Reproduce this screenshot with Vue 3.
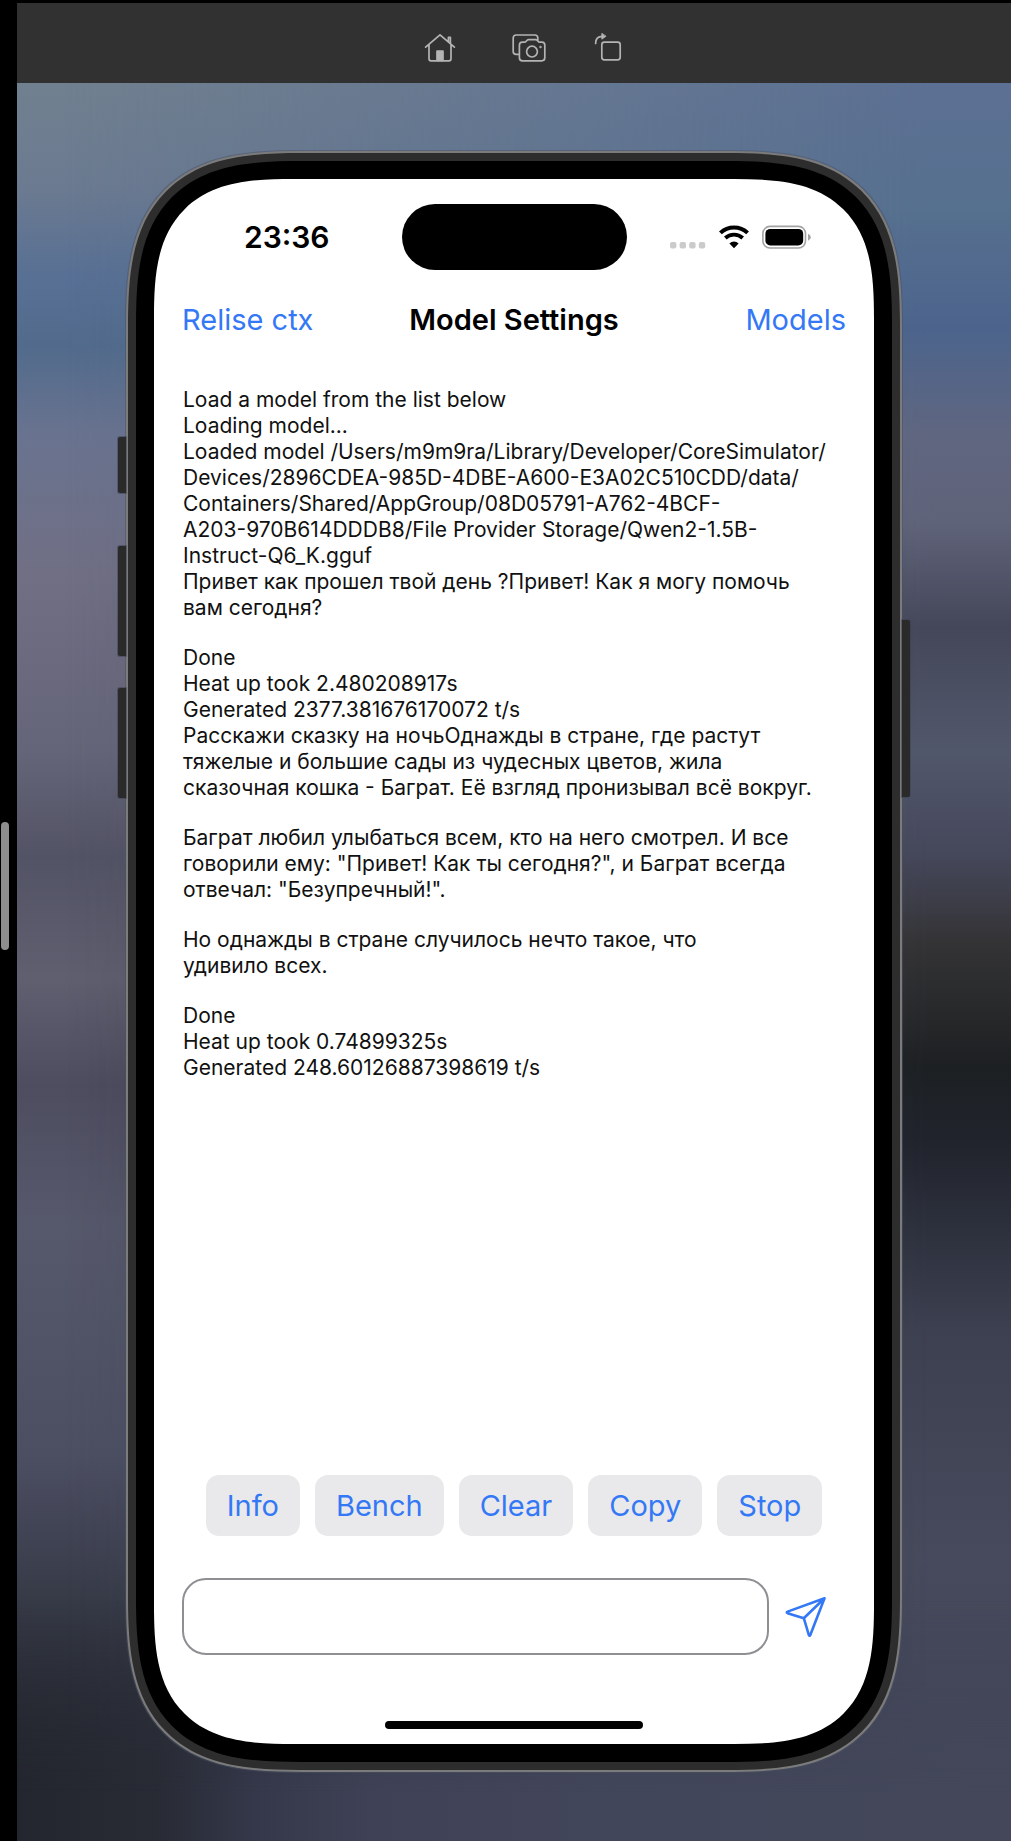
<script setup>
import { ref } from 'vue'

const message = ref('')
const actions = ['Info', 'Bench', 'Clear', 'Copy', 'Stop']
const log = [
  [
    'Load a model from the list below',
    'Loading model...',
    'Loaded model /Users/m9m9ra/Library/Developer/CoreSimulator/',
    'Devices/2896CDEA-985D-4DBE-A600-E3A02C510CDD/data/',
    'Containers/Shared/AppGroup/08D05791-A762-4BCF-',
    'A203-970B614DDDB8/File Provider Storage/Qwen2-1.5B-',
    'Instruct-Q6_K.gguf',
    'Привет как прошел твой день ?Привет! Как я могу помочь',
    'вам сегодня?',
  ],
  [
    'Done',
    'Heat up took 2.480208917s',
    'Generated 2377.381676170072 t/s',
    'Расскажи сказку на ночьОднажды в стране, где растут',
    'тяжелые и большие сады из чудесных цветов, жила',
    'сказочная кошка - Баграт. Её взгляд пронизывал всё вокруг.',
  ],
  [
    'Баграт любил улыбаться всем, кто на него смотрел. И все',
    'говорили ему: "Привет! Как ты сегодня?", и Баграт всегда',
    'отвечал: "Безупречный!".',
  ],
  ['Но однажды в стране случилось нечто такое, что', 'удивило всех.'],
  ['Done', 'Heat up took 0.74899325s', 'Generated 248.60126887398619 t/s'],
]
</script>

<template>
  <div class="desktop">
    <aside class="edge"><span class="handle"></span></aside>
    <main class="simulator">
      <header class="toolbar">
        <button class="tool home" aria-label="Home">
          <svg width="32" height="30" viewBox="0 0 32 30" fill="none" stroke="#b4b4b4" stroke-width="1.7" stroke-linejoin="round" stroke-linecap="round">
            <path d="M1.6 14.2 16 1.8l14.4 12.4M5 11.6v14.2q0 2 2 2h18q2 0 2-2V11.6M24.4 8.6V4.4h2v6" />
            <path d="M13 27.5v-9.3h6v9.3z" fill="#b4b4b4" />
          </svg>
        </button>
        <button class="tool" aria-label="Screenshot">
          <svg width="34" height="30" viewBox="0 0 34 30" fill="none" stroke="#b4b4b4" stroke-width="1.7" stroke-linejoin="round" stroke-linecap="round">
            <path d="M6.4 21.4H4.2q-3 0-3-3V5q0-3 3-3h18.6q3 0 3 3v2" />
            <path d="M10.4 9.2h2.2c1.6 0 2-2.6 3.8-2.6h7.4c1.8 0 2.2 2.6 3.8 2.6h2.2q3 0 3 3v12.6q0 3-3 3H10.4q-3 0-3-3V12.2q0-3 3-3z" />
            <circle cx="20" cy="18.6" r="5.4" />
            <circle cx="28.4" cy="14" r=".8" fill="#b4b4b4" stroke-width=".8" />
          </svg>
        </button>
        <button class="tool" aria-label="Rotate">
          <svg width="28" height="30" viewBox="0 0 28 30" fill="none" stroke="#b4b4b4" stroke-width="1.7" stroke-linejoin="round" stroke-linecap="round">
            <rect x="7.8" y="9.2" width="18.4" height="17.6" rx="2.6" />
            <path d="M1.6 10.4C1.6 5.8 4 3.4 8.4 3.4" />
            <path d="M7.8.6v5.6l4-2.8z" fill="#b4b4b4" stroke-width=".8" />
          </svg>
        </button>
      </header>

      <div class="stage">
        <div class="phone">
          <span class="side-key action"></span>
          <span class="side-key volume-up"></span>
          <span class="side-key volume-down"></span>
          <span class="side-key power"></span>
          <div class="bezel">
            <div class="screen">
              <div class="status">
                <time class="clock">23:36</time>
                <span class="island"></span>
                <div class="indicators">
                  <svg width="36" height="26" viewBox="0 0 36 26" fill="#cbcbcc">
                    <rect x="0" y="18" width="6.4" height="6.4" rx="2" />
                    <rect x="9.6" y="18" width="6.4" height="6.4" rx="2" />
                    <rect x="19.2" y="18" width="6.4" height="6.4" rx="2" />
                    <rect x="28.8" y="18" width="6.4" height="6.4" rx="2" />
                  </svg>
                  <svg width="30" height="26" viewBox="0 0 30 26" fill="none" stroke="#000">
                    <path d="M1.4 8.9a19.8 19.8 0 0 1 27.2 0" stroke-width="4" />
                    <path d="M6.3 14a12.8 12.8 0 0 1 17.4 0" stroke-width="3.8" />
                    <path d="M10.4 19.4a6.8 6.8 0 0 1 9.2 0L15 24.2z" fill="#000" stroke="none" />
                  </svg>
                  <svg width="49" height="26" viewBox="0 0 49 26">
                    <rect x=".9" y="2.4" width="42.6" height="21.6" rx="7" fill="none" stroke="#a3a3a3" stroke-width="1.6" />
                    <rect x="3.4" y="4.9" width="37.8" height="16.6" rx="4.8" />
                    <path d="M46 9.8q2.8 1 2.8 3.5T46 16.8z" fill="#a3a3a3" />
                  </svg>
                </div>
              </div>

              <nav class="nav">
                <button class="link">Relise ctx</button>
                <h1 class="title">Model Settings</h1>
                <button class="link end">Models</button>
              </nav>

              <section class="log">
                <p v-for="(block, i) in log" :key="i" class="block">{{ block.join('\n') }}</p>
              </section>

              <div class="actions">
                <button v-for="name in actions" :key="name" class="action-button">{{ name }}</button>
              </div>

              <form class="composer" @submit.prevent>
                <input v-model="message" class="field" type="text" aria-label="Message" />
                <button class="send" type="submit" aria-label="Send">
                  <svg width="42" height="42" viewBox="0 0 42 42" fill="none" stroke="#3478f6" stroke-width="2.6" stroke-linejoin="round" stroke-linecap="round">
                    <path d="M39.5 2.3 2.6 15.6q-1.6.8 0 1.6l16.2 5 5 16.6q.8 1.6 1.6 0zM39.5 2.3 18.8 22.2" />
                  </svg>
                </button>
              </form>
              <span class="home-bar"></span>
            </div>
          </div>
        </div>
      </div>
    </main>
  </div>
</template>

<style>
body {
  margin: 0;
  background: #000;
}
</style>

<style scoped>
.desktop {
  display: flex;
  box-sizing: border-box;
  min-height: 100vh;
  padding-top: 3px;
  background: #000;
  color: #000;
  font-family: Inter, "Liberation Sans", sans-serif;
}

button {
  margin: 0;
  padding: 0;
  border: 0;
  background: none;
  color: #3478f6;
  font: inherit;
}

.edge {
  display: flex;
  flex: 0 0 17px;
  align-items: center;
  padding-bottom: 72px;
}

.handle {
  width: 8px;
  height: 128px;
  margin-left: 1px;
  border-radius: 4px;
  background: #8e8e8e;
}

.simulator {
  display: flex;
  flex: 1;
  flex-direction: column;
  min-width: 0;
}

.toolbar {
  display: flex;
  align-items: center;
  justify-content: center;
  gap: 48px;
  box-sizing: border-box;
  height: 80px;
  padding: 10px 0 0 18px;
  background: #313131;
}

.tool {
  display: flex;
}

.home {
  padding-right: 8px;
}

.stage {
  position: relative;
  display: flex;
  flex: 1;
  padding: 68px 109px 69px;
  background: linear-gradient(#71808f 0%, #6b7a90 6%, #587094 11%, #526b8c 15%, #69738f 20%, #706f84 28%, #656579 38%, #525364 44%, #5f5f70 51%, #4e4d60 57%, #56586b 65%, #4c4e62 78%, #353945 87%, #23262e 98%);
}

.stage::before {
  position: absolute;
  inset: 0;
  background: linear-gradient(#5c7093 0%, #56708f 7%, #4c648c 14%, #5f6680 20%, #5f6379 25%, #444759 31%, #51576b 38%, #45475a 44%, #333335 49%, #1d2022 56%, #20232b 60%, #2c303c 65%, #3d4050 71%, #464a5c 84%, #434659 92%, #40455a 100%);
  content: "";
  mask-image: linear-gradient(90deg, transparent 5%, #000 92%);
}

.stage::after {
  position: absolute;
  inset: auto 0 0;
  height: 240px;
  background: linear-gradient(90deg, #23262e 0%, #282b34 14%, #34384a 24%, #3f4256 36%, #42465a 60%, #434759 100%);
  content: "";
  mask-image: linear-gradient(transparent, #000 80%);
}

.phone {
  position: relative;
  z-index: 1;
  display: flex;
  flex: 1;
  box-sizing: border-box;
  min-width: 0;
  padding: 8px;
  border: 2px solid #7b7b7b;
  border-radius: 136px;
  background: #2d2d2d;
  box-shadow: 0 0 0 1px #4a506480;
}

.bezel {
  display: flex;
  flex: 1;
  min-width: 0;
  padding: 18px;
  border-radius: 126px;
  background: #000;
}

.screen {
  display: flex;
  flex: 1;
  flex-direction: column;
  box-sizing: border-box;
  min-width: 0;
  padding: 25px 28px 15px;
  border-radius: 110px;
  background: #fff;
}

/* Continuous corners where the browser can draw them */
@supports (corner-shape: superellipse(1.5)) {
  .phone {
    border-radius: 178px;
    corner-shape: superellipse(1.5);
  }

  .bezel {
    border-radius: 166px;
    corner-shape: superellipse(1.5);
  }

  .screen {
    border-radius: 140px;
    corner-shape: superellipse(1.5);
  }
}

.side-key {
  position: absolute;
  left: -10px;
  width: 8px;
  height: 110px;
  border-radius: 2px 0 0 2px;
  background: #2a2a2a;
  box-shadow: 0 0 0 1px #3c405080;
}

.action {
  top: 284px;
  height: 56px;
}

.volume-up {
  top: 393px;
}

.volume-down {
  top: 535px;
}

.power {
  top: 467px;
  right: -10px;
  left: auto;
  height: 177px;
  border-radius: 0 2px 2px 0;
}

.status {
  display: grid;
  grid-template-columns: 1fr 225px 1fr;
  align-items: center;
}

.clock {
  padding-right: 10px;
  font-size: 30px;
  font-weight: 600;
  text-align: center;
}

.island {
  height: 66px;
  border-radius: 33px;
  background: #000;
}

.indicators {
  display: flex;
  justify-content: flex-end;
  gap: 13px;
  padding-right: 35px;
}

.nav {
  display: grid;
  grid-template-columns: 1fr auto 1fr;
  align-items: center;
  height: 98px;
}

.link {
  justify-self: start;
  font-size: 29px;
}

.link.end {
  justify-self: end;
}

.title {
  margin: 0;
  font-size: 29px;
  font-weight: 600;
}

.log {
  flex: 1;
  padding: 19px 1px 0;
  color: #111;
  font-size: 21px;
  line-height: 26px;
}

.block {
  margin: 0 0 24px;
  white-space: pre;
}

.actions {
  display: flex;
  justify-content: center;
  gap: 15px;
}

.action-button {
  height: 61px;
  padding: 0 21px;
  border-radius: 13px;
  background: #e9e9eb;
  font-size: 29px;
}

.composer {
  display: flex;
  align-items: center;
  gap: 16px;
  margin-top: 42px;
}

.field {
  box-sizing: border-box;
  flex: 1;
  min-width: 0;
  height: 77px;
  padding: 0 20px;
  border: 2px solid #8e8e93;
  border-radius: 24px;
  outline: none;
  background: #fff;
  font: inherit;
  font-size: 29px;
}

.send {
  display: flex;
  margin-right: 19px;
}

.home-bar {
  align-self: center;
  width: 258px;
  height: 8px;
  margin-top: 66px;
  border-radius: 4px;
  background: #000;
}
</style>
